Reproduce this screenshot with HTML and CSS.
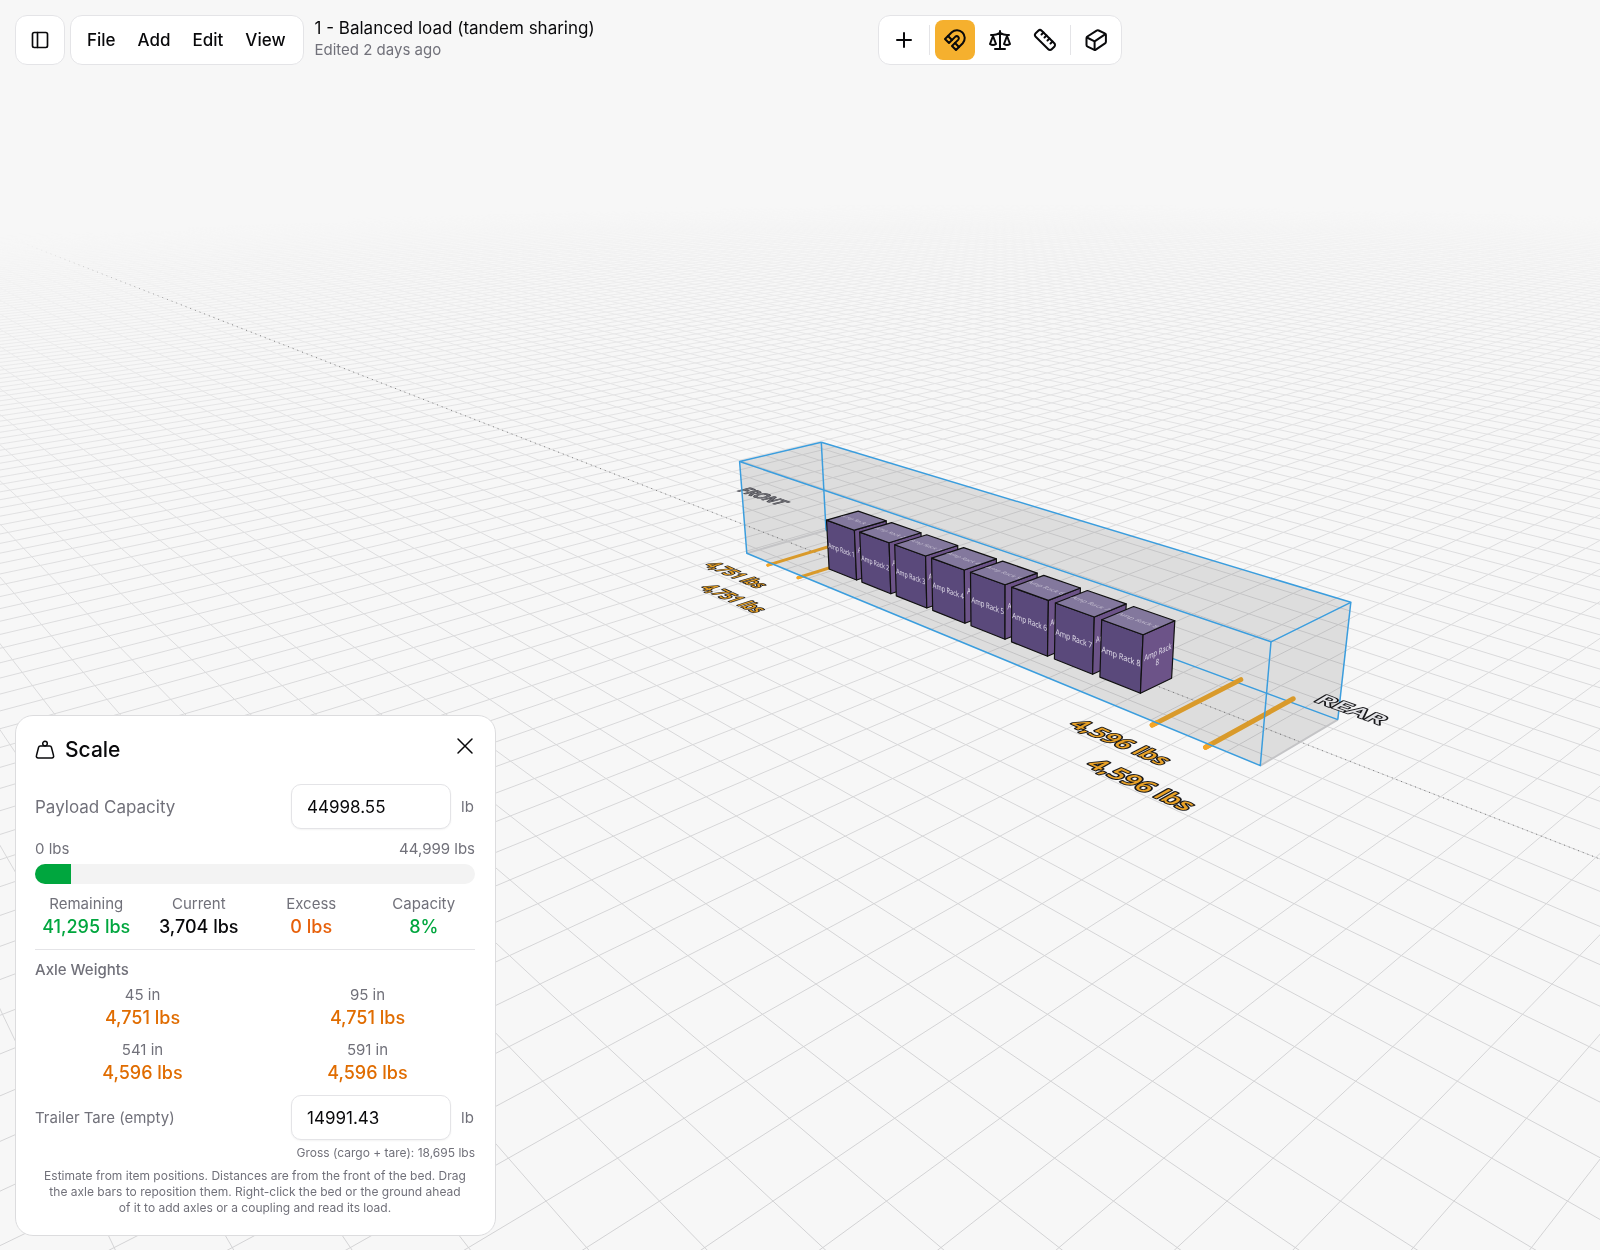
FILE: index.html
```html
<!DOCTYPE html>
<html lang="en">
<head>
<meta charset="utf-8">
<meta name="viewport" content="width=device-width, initial-scale=1">
<title>1 - Balanced load (tandem sharing)</title>
<link rel="stylesheet" href="styles.css">
</head>
<body>
<div class="app">
  <div class="scene">
    <canvas class="scene-layer" id="grid" width="1600" height="1250"></canvas>
    <svg class="scene-layer" id="world" viewBox="0 0 1600 1250" preserveAspectRatio="xMidYMid slice" role="img" aria-label="Trailer with eight amp racks"></svg>
  </div>

  <header class="topbar">
    <div class="topbar-left">
      <button class="card side-toggle" type="button" aria-label="Toggle sidebar">
        <svg class="icon icon-small" viewBox="0 0 24 24"><rect x="3" y="3" width="18" height="18" rx="2"/><path d="M9 3v18"/></svg>
      </button>
      <nav class="card menu" aria-label="Main menu">
        <button class="menu-item" type="button">File</button>
        <button class="menu-item" type="button">Add</button>
        <button class="menu-item" type="button">Edit</button>
        <button class="menu-item" type="button">View</button>
      </nav>
      <div class="doc">
        <h1 class="doc-title">1 - Balanced load (tandem sharing)</h1>
        <p class="doc-meta">Edited 2 days ago</p>
      </div>
    </div>
    <div class="card toolbar" role="toolbar" aria-label="Tools">
      <button class="tool" type="button" aria-label="Add item"><svg class="icon" viewBox="0 0 24 24"><path d="M5 12h14M12 5v14"/></svg></button>
      <span class="separator"></span>
      <button class="tool tool-active" type="button" aria-label="Snap" aria-pressed="true"><svg class="icon" viewBox="0 0 24 24"><path d="m6 15-4-4 6.75-6.77a7.79 7.79 0 0 1 11 11L13 22l-4-4 6.39-6.36a2.14 2.14 0 0 0-3-3L6 15"/><path d="m5 8 4 4M12 15l4 4"/></svg></button>
      <button class="tool" type="button" aria-label="Scale"><svg class="icon" viewBox="0 0 24 24"><path d="m16 16 3-8 3 8c-.87.65-1.92 1-3 1s-2.13-.35-3-1Z"/><path d="m2 16 3-8 3 8c-.87.65-1.92 1-3 1s-2.13-.35-3-1Z"/><path d="M7 21h10M12 3v18M3 7h2c2 0 5-1 7-2 2 1 5 2 7 2h2"/></svg></button>
      <button class="tool" type="button" aria-label="Measure"><svg class="icon" viewBox="0 0 24 24"><path d="M21.3 15.3a2.4 2.4 0 0 1 0 3.4l-2.6 2.6a2.4 2.4 0 0 1-3.4 0L2.7 8.7a2.41 2.41 0 0 1 0-3.4l2.6-2.6a2.41 2.41 0 0 1 3.4 0Z"/><path d="m14.5 12.5 2-2M11.5 9.5l2-2M8.5 6.5l2-2M17.5 15.5l2-2"/></svg></button>
      <span class="separator"></span>
      <button class="tool" type="button" aria-label="View angle"><svg class="icon" viewBox="0 0 24 24"><path d="M2.5 10.200Q2.5 9.100 3.400 8.500L12.600 2.600Q13.600 2 14.700 2.500L20.800 5.300Q21.900 5.800 21.900 6.900V13.700Q21.900 14.700 21 15.300L11.800 21.600Q10.900 22.200 9.900 21.700L3.600 18.700Q2.500 18.200 2.500 17.100Z"/><path d="m2.900 9.500 7.700 3.900 10.800-7.300M10.600 13.400v8.300"/></svg></button>
    </div>
  </header>

  <section class="panel" aria-labelledby="scale-title">
    <div class="panel-head">
      <svg class="panel-icon" viewBox="0 0 20 20"><circle cx="10" cy="3.600" r="2.300"/><path d="M5.300 6h9.400a1.800 1.800 0 0 1 1.700 1.300l2.200 8.400a1.800 1.800 0 0 1-1.700 2.300H3.100a1.800 1.800 0 0 1-1.700-2.300l2.200-8.400A1.800 1.800 0 0 1 5.300 6Z"/></svg>
      <h2 class="panel-title" id="scale-title">Scale</h2>
      <button class="close" type="button" aria-label="Close"><svg class="icon icon-light" viewBox="0 0 24 24"><path d="m5 5 14 14M19 5 5 19"/></svg></button>
    </div>

    <div class="field">
      <label class="field-label field-label-lg" for="payload">Payload Capacity</label>
      <input class="field-input" id="payload" type="text" inputmode="decimal" value="44998.55">
      <span class="unit">lb</span>
    </div>

    <div class="limits"><span>0 lbs</span><span>44,999 lbs</span></div>
    <div class="bar" role="progressbar" aria-label="Payload used" aria-valuenow="8" aria-valuemin="0" aria-valuemax="100"><div class="bar-fill" style="width: 8.2%"></div></div>

    <dl class="stats">
      <div class="stat"><dt>Remaining</dt><dd class="ok">41,295 lbs</dd></div>
      <div class="stat"><dt>Current</dt><dd>3,704 lbs</dd></div>
      <div class="stat"><dt>Excess</dt><dd class="excess">0 lbs</dd></div>
      <div class="stat"><dt>Capacity</dt><dd class="ok">8%</dd></div>
    </dl>

    <h3 class="subhead">Axle Weights</h3>
    <dl class="axles">
      <div class="stat"><dt>45 in</dt><dd class="axle">4,751 lbs</dd></div>
      <div class="stat"><dt>95 in</dt><dd class="axle">4,751 lbs</dd></div>
      <div class="stat"><dt>541 in</dt><dd class="axle">4,596 lbs</dd></div>
      <div class="stat"><dt>591 in</dt><dd class="axle">4,596 lbs</dd></div>
    </dl>

    <div class="field">
      <label class="field-label" for="tare">Trailer Tare (empty)</label>
      <input class="field-input" id="tare" type="text" inputmode="decimal" value="14991.43">
      <span class="unit">lb</span>
    </div>
    <p class="gross">Gross (cargo + tare): 18,695 lbs</p>
    <p class="note">Estimate from item positions. Distances are from the front of the bed. Drag the axle bars to reposition them. Right-click the bed or the ground ahead of it to add axles or a coupling and read its load.</p>
  </section>
</div>
<script src="scene.js"></script>
</body>
</html>
```
FILE: styles.css
```css
* { box-sizing: border-box; }

body {
  margin: 0;
  background: #f7f7f7;
  color: #09090b;
  font-family: Inter, "Liberation Sans", sans-serif;
}

h1, h2, h3, p, dl, dd { margin: 0; }

button {
  padding: 0;
  border: 0;
  background: none;
  color: inherit;
  font: inherit;
  cursor: pointer;
}

.app {
  position: relative;
  display: flex;
  flex-direction: column;
  justify-content: space-between;
  min-height: 100vh;
  padding: 15px 15px 14px;
  overflow: hidden;
}

/* 3D viewport behind the controls */
.scene { position: absolute; inset: 0; }
.scene-layer {
  position: absolute;
  inset: 0;
  width: 100%;
  height: 100%;
  object-fit: cover;
}

.topbar, .panel { position: relative; }

.card {
  background: #fff;
  border: 1px solid #e4e4e7;
  border-radius: 12px;
}

.topbar {
  display: grid;
  grid-template-columns: 385px 1fr;
  margin-right: -15px;
}
.topbar-left {
  grid-area: 1 / 1 / 2 / 3;
  justify-self: start;
  display: flex;
  gap: 5px;
}
.toolbar {
  grid-area: 1 / 2 / 2 / 3;
  justify-self: center;
  display: flex;
  align-items: center;
  gap: 5px;
  padding: 4px 5px;
}

.side-toggle {
  display: grid;
  place-items: center;
  width: 50px;
  height: 50px;
}
.menu {
  display: flex;
  align-items: center;
  padding: 0 6px 0 5px;
}
.menu-item {
  height: 40px;
  padding: 0 11px;
  font-size: 17px;
  font-weight: 500;
}
.doc { padding: 1px 0 0 6px; }
.doc-title {
  font-size: 17px;
  font-weight: 400;
  line-height: 24px;
}
.doc-meta {
  color: #71717a;
  font-size: 15px;
  line-height: 20px;
}

.tool {
  display: grid;
  place-items: center;
  width: 40px;
  height: 40px;
  border-radius: 8px;
}
.tool-active { background: #f5b02e; }
.separator {
  width: 1px;
  height: 30px;
  background: #e4e4e7;
}

.icon {
  width: 24px;
  height: 24px;
  fill: none;
  stroke: currentColor;
  stroke-width: 2;
  stroke-linecap: round;
  stroke-linejoin: round;
}
.icon-light { stroke-width: 1.5; }
.icon-small { width: 20px; height: 20px; }

/* Scale panel */
.panel {
  width: 481px;
  max-width: 100%;
  padding: 20px 20px 19px 19px;
  background: #fff;
  border: 1px solid #dcdcde;
  border-radius: 18px;
}
.panel-head {
  display: flex;
  align-items: center;
  gap: 10px;
  margin-bottom: 20px;
}
.panel-icon {
  width: 20px;
  height: 20px;
  fill: none;
  stroke: currentColor;
  stroke-width: 1.5;
}
.panel-title {
  flex: 1;
  font-size: 21px;
  font-weight: 500;
  line-height: 28px;
}
.close {
  align-self: flex-start;
  height: 20px;
  margin-right: -2px;
}
.close .icon { display: block; margin: -2px 0; }

.field {
  display: flex;
  align-items: center;
  gap: 10px;
  color: #71717a;
  font-size: 15px;
}
.field-label { flex: 1; }
.field-label-lg { font-size: 17px; }
.field-input {
  width: 160px;
  height: 45px;
  padding: 0 15px;
  border: 1px solid #e4e4e7;
  border-radius: 10px;
  background: #fff;
  box-shadow: 0 1px 2px #0000000d;
  color: #09090b;
  font: 400 17px Inter, "Liberation Sans", sans-serif;
}
.unit { width: 14px; }

.limits {
  display: flex;
  justify-content: space-between;
  margin: 10px 0 5px;
  color: #71717a;
  font-size: 15px;
  line-height: 20px;
}
.bar {
  height: 20px;
  overflow: hidden;
  border-radius: 10px;
  background: #f3f3f3;
}
.bar-fill {
  height: 100%;
  background: #00a63e;
}

.stats, .axles { display: grid; gap: 10px; }
.stats {
  grid-template-columns: repeat(4, 1fr);
  padding: 10px 0;
  border-bottom: 1px solid #e4e4e7;
}
.axles {
  grid-template-columns: repeat(2, 1fr);
  margin: 5px 0 10px;
}
.stat { text-align: center; white-space: nowrap; }
.stat dt {
  color: #71717a;
  font-size: 15px;
  line-height: 20px;
}
.stat dd {
  font-size: 18px;
  font-weight: 500;
  line-height: 25px;
}
.stat .ok { color: #00a63e; }
.stat .excess { color: #e7600a; }
.stat .axle { color: #e06c00; }

.subhead {
  margin-top: 10px;
  color: #71717a;
  font-size: 15px;
  font-weight: 500;
  line-height: 20px;
}
.gross {
  margin: 5px 0 7px;
  color: #71717a;
  font-size: 12px;
  line-height: 16px;
  text-align: right;
}
.note {
  padding: 0 8px;
  color: #71717a;
  font-size: 12px;
  line-height: 16px;
  text-align: center;
}

/* Objects in the viewport */
.edge { fill: none; stroke: #3b9ddd; stroke-width: 1.5; stroke-linejoin: round; }
.shade { fill: #000; fill-opacity: .1; }
.base-edge { fill: none; stroke: #c4c4c6; stroke-width: 2; }
.centre-line { fill: none; stroke: url(#centre-fade); stroke-width: 1; stroke-dasharray: 1 4; }
.axle-bar { fill: none; stroke: #d99a2b; stroke-linecap: round; }
.axle-tip { fill: none; stroke: #f5a524; stroke-linecap: round; }
.rack { stroke: #111; stroke-width: 1.2; stroke-linejoin: round; }
.rack-side { fill: #5a497b; }
.rack-end { fill: #6c5388; }
.rack-top { fill: #83789d; }
.rack-text { fill: #e4e0ec; font: 500 10px "Open Sans", sans-serif; }
.rack-text-top { fill: #c4bed0; }
.ground-text { font: 600 10px "Open Sans", sans-serif; stroke-linejoin: round; paint-order: stroke; }
.load-text { fill: #e9a227; stroke: #18181b; stroke-width: 1.2; }
.rear-text { fill: #e4e4e7; stroke: #18181b; stroke-width: 1.2; }
.front-text { fill: #7b7b82; stroke: #4b4b52; stroke-width: 1; }
```
FILE: scene.js
```js
// Camera: 50 degree field of view, pitched 23 degrees down, looking along the
// diagonal of the floor grid. One world unit is one grid cell (three feet).
const FOCAL = 1340.3, CX = 1000, CY = 625, EYE = 13.135;
const SIN = 0.3909, COS = 0.9204, NEAR = 12.565;

function camera(i, j, z) {
  const X = (i - j) * Math.SQRT1_2;
  const Z = NEAR - (i + j) * Math.SQRT1_2;
  return { X, Z, depth: Z * COS + (EYE - z) * SIN, drop: (EYE - z) * COS - Z * SIN };
}
function project(i, j, z = 0) {
  const c = camera(i, j, z);
  return [CX + FOCAL * c.X / c.depth, CY + FOCAL * c.drop / c.depth];
}

// Floor grid
const ctx = document.getElementById('grid').getContext('2d');
ctx.strokeStyle = '#cdcdcf';
ctx.lineWidth = 1;
ctx.beginPath();
for (let k = -170; k <= 70; k++) {
  const end = 24.5 - k;
  ctx.moveTo(...project(k, -170)); ctx.lineTo(...project(k, end));
  ctx.moveTo(...project(-170, k)); ctx.lineTo(...project(end, k));
}
ctx.stroke();

// Fade the grid out with distance from the camera, one narrow column at a time
const HORIZON = 55.6, REACH = 135, SCALE = FOCAL * EYE / COS;
ctx.globalCompositeOperation = 'destination-in';
const fade = document.createElement('canvas');
fade.width = 1600; fade.height = 1250;
const fctx = fade.getContext('2d');
for (let x = 0; x < 1600; x += 4) {
  const g = fctx.createLinearGradient(0, 0, 0, 1250);
  for (let y = 0; y <= 1250; y += 10) {
    let a = 0;
    if (y > HORIZON + 5) {
      const depth = SCALE / (y - HORIZON);
      const X = (x + 2 - CX) * depth / FOCAL;
      const Z = (depth - EYE * SIN) / COS;
      a = Math.pow(Math.max(0, 1 - Math.hypot(X, Z) / REACH), 1.4);
    }
    g.addColorStop(y / 1250, `rgba(0,0,0,${a})`);
  }
  fctx.fillStyle = g;
  fctx.fillRect(x, 0, 4, 1250);
}
ctx.drawImage(fade, 0, 0);

// Objects
const out = [];
const pts = list => list.map(p => project(...p).map(v => v.toFixed(1)).join(',')).join(' ');
const poly = (cls, ...list) => out.push(`<polygon class="${cls}" points="${pts(list)}"/>`);
const line = (cls, width, ...list) => out.push(`<polyline class="${cls}"${width ? ` stroke-width="${width}"` : ''} points="${pts(list)}"/>`);

// Text painted on a plane: u is the reading direction, v points down the glyphs
function label(cls, text, at, u, v, size) {
  const p = project(...at), e = 0.01;
  const d = w => project(at[0] + w[0] * e, at[1] + w[1] * e, at[2] + w[2] * e)
    .map((c, n) => ((c - p[n]) / e * size / 10).toFixed(4));
  out.push(`<text class="${cls}" text-anchor="middle" y="3.6" transform="matrix(${d(u)} ${d(v)} ${p[0].toFixed(1)} ${p[1].toFixed(1)})">${text}</text>`);
}

const I = [1, 0, 0], J = [0, 1, 0], BACK = [0, -1, 0], DOWN = [0, 0, -1];
const F = -21.84, R = -4.17, L = -11.57, B = -14.44, H = 2.72;

out.push('<defs><linearGradient id="centre-fade" gradientUnits="userSpaceOnUse" x1="20" y1="0" x2="220" y2="0"><stop offset="0" stop-color="#777" stop-opacity="0"/><stop offset="1" stop-color="#777"/></linearGradient></defs>');

line('centre-line', 0, [-120, -13, 0], [4, -13, 0]);
label('ground-text front-text', 'FRONT', [-25.95, -15.1, 0], I, J, 0.68);

poly('shade', [F, L, 0], [F, L, H], [F, B, H], [R, B, H], [R, B, 0], [R, L, 0]);
line('base-edge', 0, [F, L, 0], [F, B, 0]);
line('base-edge', 0, [R, L, 0], [R, B, 0]);
line('edge', 0, [F, B, 0], [R, B, 0]);
line('edge', 0, [F, B, H], [F, B, 0]);

const axles = [[-20.62, 3], [-19.23, 3], [-6.83, 5], [-5.42, 5]];
for (const [i, w] of axles) {
  line('axle-bar', w, [i, -11.42, 0], [i, -14.62, 0]);
  line('axle-tip', w, [i, -11.42, 0], [i, L, 0]);
}

for (let n = 0; n < 8; n++) {
  const a = -19.16 + n * 1.4235, b = a + 1.2, l = -12.44, r = -13.56, t = 1.43;
  const mid = (a + b) / 2, name = 'Amp Rack ' + (n + 1);
  poly('rack rack-side', [a, l, 0], [b, l, 0], [b, l, t], [a, l, t]);
  poly('rack rack-end', [b, l, 0], [b, r, 0], [b, r, t], [b, l, t]);
  poly('rack rack-top', [a, l, t], [b, l, t], [b, r, t], [a, r, t]);
  label('rack-text', name, [mid, l, t / 2], I, DOWN, 0.21);
  label('rack-text', 'Amp Rack', [b, -13, t / 2 + 0.12], BACK, DOWN, 0.21);
  label('rack-text', n + 1, [b, -13, t / 2 - 0.12], BACK, DOWN, 0.21);
  label('rack-text rack-text-top', name, [mid, -13, t], I, J, 0.21);
}

line('edge', 0, [F, B, H], [R, B, H], [R, L, H], [F, L, H], [F, B, H]);
line('edge', 0, [F, L, H], [F, L, 0], [R, L, 0], [R, L, H]);
line('edge', 0, [R, B, H], [R, B, 0]);

label('ground-text load-text', '4,751 lbs', [-20.6, -10.36, 0], I, J, 0.6);
label('ground-text load-text', '4,751 lbs', [-19.2, -9.3, 0], I, J, 0.6);
label('ground-text load-text', '4,596 lbs', [-6.8, -10.36, 0], I, J, 0.6);
label('ground-text load-text', '4,596 lbs', [-5.37, -9.3, 0], I, J, 0.6);
label('ground-text rear-text', 'REAR', [-4.22, -15.08, 0], I, J, 0.66);

document.getElementById('world').innerHTML = out.join('');
```
